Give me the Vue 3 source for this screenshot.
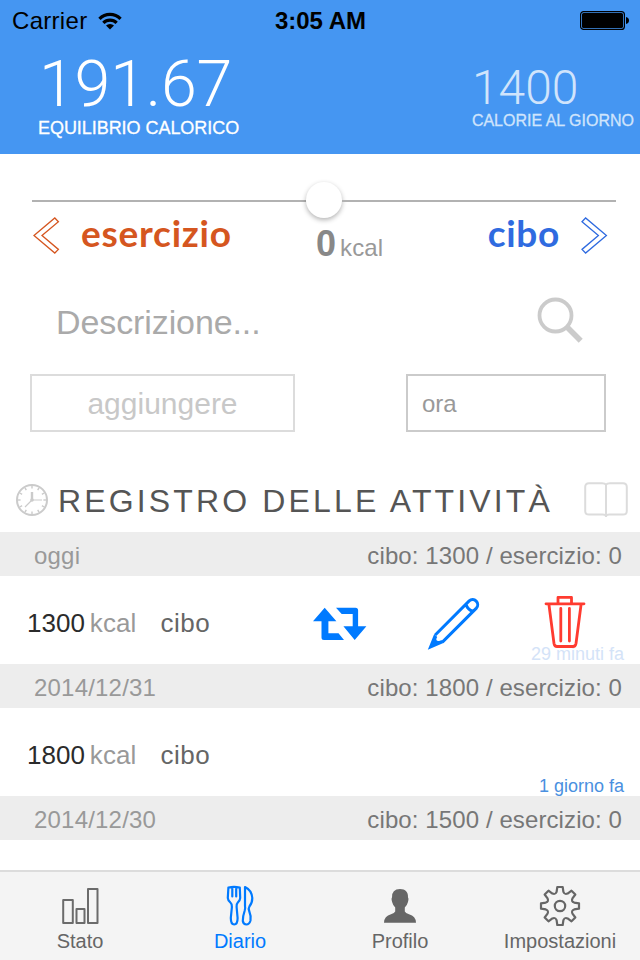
<script setup>
const days = [
  { label: 'oggi', food: 1300, exercise: 0, entry: { kcal: 1300, type: 'cibo', ago: '29 minuti fa', active: true } },
  { label: '2014/12/31', food: 1800, exercise: 0, entry: { kcal: 1800, type: 'cibo', ago: '1 giorno fa', active: false } },
  { label: '2014/12/30', food: 1500, exercise: 0, entry: null },
]

// Outline of an eight-toothed cog centred on 21,21.
function cogPath() {
  const at = (x, y, turn) => {
    const a = (turn * Math.PI) / 4
    return `${(21 + x * Math.cos(a) - y * Math.sin(a)).toFixed(2)} ${(21 + x * Math.sin(a) + y * Math.cos(a)).toFixed(2)}`
  }
  let d = ''
  for (let i = 0; i < 8; i++) {
    d += `${i ? 'L' : 'M'}${at(-2.7, -19, i)}L${at(2.7, -19, i)}L${at(3.4, -14.2, i)}`
    d += `C${at(4.4, -11.8, i)} ${at(-4.4, -11.8, i + 1)} ${at(-3.4, -14.2, i + 1)}`
  }
  return d + 'Z'
}
const cog = cogPath()
const ticks = Array.from({ length: 12 }, (_, i) => i * 30)
</script>

<template>
  <div class="screen">
    <header>
      <div class="status">
        <div class="carrier">
          <span>Carrier</span>
          <svg width="26" height="20" viewBox="0 0 26 20">
            <path d="M1.3 6.7A16.5 16.5 0 0 1 24.7 6.7L22.4 9A13.3 13.3 0 0 0 3.6 9Z" />
            <path d="M5.2 10.7A11 11 0 0 1 20.8 10.7L18.5 13A7.8 7.8 0 0 0 7.5 13Z" />
            <path d="M9 14.6A5.6 5.6 0 0 1 17 14.6L13 18.6Z" />
          </svg>
        </div>
        <div class="time">3:05 AM</div>
        <div class="battery">
          <svg width="50" height="20" viewBox="0 0 50 20">
            <rect x=".6" y=".6" width="43.8" height="17.8" rx="3" fill="none" stroke="#000" stroke-width="1.2" />
            <rect x="2" y="2" width="41" height="15" rx="1.6" />
            <path d="M46 6Q49 6.6 49 9.5Q49 12.4 46 13Z" />
          </svg>
        </div>
      </div>
      <div class="totals">
        <div class="balance">
          <div class="num">191.67</div>
          <div class="cap">EQUILIBRIO CALORICO</div>
        </div>
        <div class="daily">
          <div class="num">1400</div>
          <div class="cap">CALORIE AL GIORNO</div>
        </div>
      </div>
    </header>

    <section class="entry-form">
      <div class="slider">
        <i class="track"></i><i class="knob"></i><i class="track"></i>
      </div>
      <div class="modes">
        <div class="mode exercise">
          <svg width="28" height="38" viewBox="0 0 28 38">
            <path d="M1 18.5L21.8 1L25.4 4.7L9 18.5L25.4 32.4L21.8 36Z" />
          </svg>
          <span>esercizio</span>
        </div>
        <div class="amount"><b>0</b><span>kcal</span></div>
        <div class="mode food">
          <span>cibo</span>
          <svg width="28" height="38" viewBox="0 0 28 38">
            <path d="M26.4 18.5L5.6 1L2 4.7L18.4 18.5L2 32.4L5.6 36Z" />
          </svg>
        </div>
      </div>
      <div class="description">
        <span>Descrizione...</span>
        <svg width="48" height="48" viewBox="0 0 48 48" fill="none" stroke="#cbcbcb">
          <circle cx="18.5" cy="18.5" r="16" stroke-width="3.8" />
          <path d="M30 30L43.7 43.7" stroke-width="5.6" />
        </svg>
      </div>
      <div class="controls">
        <div class="add">aggiungere</div>
        <div class="hour">ora</div>
      </div>
    </section>

    <section class="title">
      <svg class="clock" width="32" height="32" viewBox="0 0 32 32" fill="none" stroke="#cbcbcb">
        <circle cx="16" cy="16" r="15" stroke-width="2" />
        <path v-for="t in ticks" :key="t" d="M16 2V4.6" stroke-width="1.4" :transform="`rotate(${t} 16 16)`" />
        <path d="M16 8V16" stroke-width="2.4" />
        <path d="M16 16H26M16 16L9 23" stroke-width="1.2" />
        <circle cx="16" cy="16" r="1.8" fill="#cbcbcb" stroke="none" />
      </svg>
      <h1>REGISTRO DELLE ATTIVITÀ</h1>
      <svg width="44" height="36" viewBox="0 0 44 36" fill="none" stroke="#dcdcdc" stroke-width="2">
        <path d="M22 2.6Q21 1.2 18 1.2H5Q1.2 1.2 1.2 5V29Q1.2 32.6 5 32.6H18.5Q22 32.6 22 34.6Q22 32.6 25.5 32.6H39Q42.8 32.6 42.8 29V5Q42.8 1.2 39 1.2H26Q23 1.2 22 2.6V35" />
      </svg>
    </section>

    <main>
      <template v-for="day in days" :key="day.label">
        <div class="day">
          <span class="date">{{ day.label }}</span>
          <span class="sum">cibo: {{ day.food }} / esercizio: {{ day.exercise }}</span>
        </div>
        <div v-if="day.entry" class="entry">
          <span class="kcal">{{ day.entry.kcal }}</span>
          <span class="unit">kcal</span>
          <span class="type">{{ day.entry.type }}</span>
          <div v-if="day.entry.active" class="actions">
            <svg class="repeat" width="54" height="34" viewBox="0 0 54 34" fill="#007aff">
              <path d="M11.7 .7L23.4 14.3H15.4V26.3H25.5L31 33H11Q8.5 33 8.5 30.5V14.3H0Z" />
              <path d="M23 .7H42.5Q45.1 .7 45.1 3.2V19.3H53.4L41.7 33L30.4 19.3H39.7V7H28.7Z" />
            </svg>
            <svg class="pencil" width="54" height="54" viewBox="0 0 54 54">
              <path d="M8.2 38L42.2 3.9A5.1 5.1 0 0 1 49.4 11.1L15.4 45.1M38.9 7.2Q40.8 12.8 46 14.3" fill="none" stroke="#007aff" stroke-width="3" />
              <path d="M7.2 37L10.2 40Q8.4 43 10.3 43.8Q12.5 44.6 14.4 43L16.4 46.1L.8 52.7Z" fill="#007aff" />
            </svg>
            <svg class="trash" width="42" height="54" viewBox="0 0 42 54" fill="none" stroke="#ff3b30" stroke-width="2.8" stroke-linecap="round" stroke-linejoin="round">
              <path d="M2 8.8H40M14 8.5V2.4H27.5V8.5M5 10L10 48.5Q10.5 51.5 13 51.5H29Q31.5 51.5 32 48.5L37 10M16.8 13.5V46M25.4 13.5V46" />
            </svg>
          </div>
          <span class="ago" :class="{ faded: day.entry.active }">{{ day.entry.ago }}</span>
        </div>
      </template>
    </main>

    <nav>
      <div class="tab">
        <svg width="42" height="42" viewBox="0 0 42 42" fill="none" stroke="#6b6b6b" stroke-width="2" stroke-linejoin="round">
          <path d="M4.2 15H13.8V38H4.2ZM17.5 24H25.5V38H17.5ZM29 4H38.5V38H29Z" />
        </svg>
        <span>Stato</span>
      </div>
      <div class="tab current">
        <svg width="42" height="42" viewBox="0 0 42 42" fill="none" stroke="#007aff" stroke-width="2.2" stroke-linejoin="round" stroke-linecap="round">
          <path d="M9.4 2.5Q15 1.4 20.8 2.5L21.2 13Q21.2 15 18.8 17.5Q17.3 19 17.6 22L18.6 33Q18.6 39.5 15.2 39.5Q11.8 39.5 11.8 33L12.9 22Q13.1 19 11.4 17.5Q8.8 15 8.8 13ZM13.3 2.5V11.5M17.2 2.5V11.5" />
          <path d="M26 21V2Q32.6 5 33.3 13Q33.3 18 30.4 21.5Q29.2 23.5 30.2 26Q32.2 31 31.5 35.5Q30.3 39.5 27.4 39.5Q24.5 39.5 23.8 36Q23.8 31 25.6 26Q26.6 23 26 21Z" />
        </svg>
        <span>Diario</span>
      </div>
      <div class="tab">
        <svg width="42" height="42" viewBox="0 0 42 42" fill="#666">
          <path d="M21 4C26.5 4 29.3 7 29 12.5Q30 13.5 28.9 17.2Q28 20.5 25.8 22.5V26.5Q26.5 28.3 30 29.2Q36.8 30.8 37 37.8H5Q5.2 30.8 12 29.2Q15.5 28.3 16.2 26.5V22.5Q14 20.5 13.2 17.2Q12 13.5 13 12.5Q12.7 4 21 4Z" />
        </svg>
        <span>Profilo</span>
      </div>
      <div class="tab">
        <svg width="42" height="42" viewBox="0 0 42 42" fill="none" stroke="#666" stroke-width="2.2" stroke-linejoin="round">
          <path :d="cog" />
          <circle cx="21" cy="21" r="5.2" />
        </svg>
        <span>Impostazioni</span>
      </div>
    </nav>
  </div>
</template>

<style>
body { background: #fff; }
</style>

<style scoped>
* { box-sizing: border-box; }
svg { display: block; flex: none; }
.screen {
  width: 640px;
  height: 960px;
  overflow: hidden;
  display: flex;
  flex-direction: column;
  background: #fff;
  font-family: "Liberation Sans", Arial, sans-serif;
  white-space: nowrap;
}
header { height: 154px; flex: none; background: #4596f2; color: #fff; }
.status {
  height: 40px;
  display: grid;
  grid-template-columns: 1fr auto 1fr;
  align-items: center;
  padding: 1px 11px 0 12px;
  color: #000;
  font-size: 24px;
  line-height: 39px;
}
.carrier { display: flex; align-items: center; gap: 10px; letter-spacing: .3px; }
.time { font-weight: bold; }
.battery { display: flex; justify-content: flex-end; margin-right: -1px; }
.totals { display: flex; justify-content: space-between; padding: 13px 6px 0 38px; }
.num { font-family: Roboto, sans-serif; font-weight: 300; }
.balance .num { padding-left: 1px; font-size: 64.5px; line-height: 62px; letter-spacing: -.2px; }
.balance .cap { margin-top: 3px; font-size: 18px; line-height: 20px; letter-spacing: -.05px; -webkit-text-stroke: .3px #fff; }
.daily { padding-top: 10px; color: #d0e4fc; }
.daily .num { font-size: 48px; line-height: 50px; letter-spacing: 0; }
.daily .cap { margin-top: -1px; font-size: 16px; line-height: 17px; -webkit-text-stroke: .3px #d0e4fc; }

.entry-form { height: 318px; flex: none; padding-top: 28px; }
.slider { display: flex; align-items: center; height: 36px; padding: 0 24px 0 32px; }
.track { flex: 1; height: 2px; margin-top: 2px; background: #b2b2b2; }
.knob { width: 36px; height: 36px; border-radius: 50%; background: #fff; box-shadow: 0 2px 5px rgba(0, 0, 0, .3); }
.modes { display: grid; grid-template-columns: 283px auto 1fr; height: 66px; padding: 0 32px 0 33px; }
.mode { display: flex; align-items: flex-start; font-family: Lato, sans-serif; font-weight: 700; font-size: 37px; line-height: 30px; }
.mode svg { fill: none; stroke: currentColor; stroke-width: 1.3; margin-top: -1px; }
.exercise { color: #d55620; gap: 20px; letter-spacing: .75px; }
.food { color: #2f6be0; justify-content: flex-end; gap: 20px; letter-spacing: .7px; }
.amount { display: flex; align-items: baseline; gap: 4px; color: #999; line-height: 52px; }
.amount b { font-size: 36px; color: #888; }
.amount span { font-size: 24px; letter-spacing: .1px; }
.description { height: 90px; display: flex; justify-content: space-between; padding: 13px 55px 0 56px; font-size: 34px; line-height: 50px; letter-spacing: -.1px; color: #aaa; }
.controls { display: flex; justify-content: space-between; padding: 0 34px 0 30px; }
.add { width: 265px; height: 58px; border: 2px solid #dcdcdc; text-align: center; font-size: 30px; line-height: 56px; color: #c8c8c8; }
.hour { width: 200px; height: 58px; border: 2px solid #cbcbcb; padding-left: 14px; font-size: 24px; line-height: 56px; color: #999; }

.title { height: 60px; flex: none; display: flex; padding: 10px 12px 0 16px; }
.title .clock { margin-top: 2px; }
h1 { flex: 1; margin: 0 0 0 10px; font-size: 32px; font-weight: normal; line-height: 38px; letter-spacing: 3.15px; color: #555; }

main { flex: 1; min-height: 0; overflow: hidden; }
.day { height: 44px; display: flex; justify-content: space-between; padding: 2px 18px 0 34px; background: #ededed; font-size: 24px; line-height: 44px; }
.date { color: #999; letter-spacing: .2px; }
.sum { color: #777; letter-spacing: .1px; }
.entry { position: relative; isolation: isolate; height: 88px; display: flex; padding: 3px 0 0 27px; font-size: 26px; line-height: 88px; }
.kcal { color: #2b2b2b; }
.unit { margin-left: 5px; color: #999; letter-spacing: .1px; }
.type { margin-left: 24px; color: #666; letter-spacing: .5px; }
.actions { display: flex; align-items: flex-start; margin-left: 103px; padding-top: 17px; }
.repeat { margin-top: 11px; }
.pencil { margin: 1px 0 0 60px; }
.trash { margin-left: 63px; margin-top: -1px; }
.ago { position: absolute; right: 16px; bottom: 0; font-size: 18px; line-height: 20px; color: #4a90e0; }
.ago.faded { color: #d4e3f8; z-index: -1; }

nav { height: 90px; flex: none; display: grid; grid-template-columns: repeat(4, 1fr); border-top: 2px solid #dcdcdc; background: #f4f4f4; }
.tab { display: flex; flex-direction: column; align-items: center; padding-top: 13px; font-size: 20px; line-height: 26px; color: #666; }
.tab span { margin-top: 1px; }
.current { color: #007aff; }
</style>
